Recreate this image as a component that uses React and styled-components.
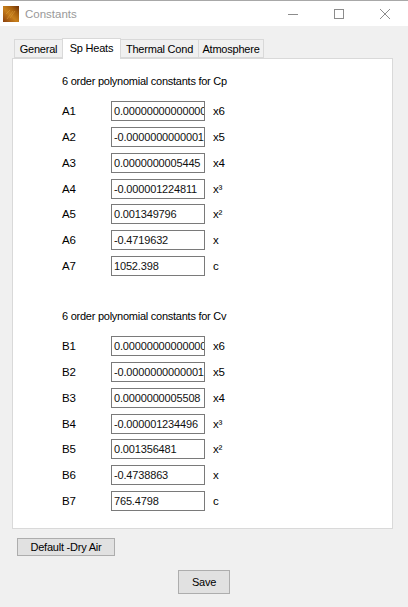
import React from "react";
import styled, { createGlobalStyle } from "styled-components";

const Global = createGlobalStyle`
  html, body { margin: 0; padding: 0; background: #f0f0f0; }
  * { box-sizing: border-box; }
  #root { width: 408px; height: 607px; overflow: hidden; }
`;

const Window = styled.div`
  width: 408px; height: 607px; background: #f0f0f0; display: flex; flex-direction: column;
  font-family: "Liberation Sans", Arial, sans-serif; font-size: 11px; color: #000;
  letter-spacing: -0.22px; border-top: 1px solid #a8a8a8;
`;
const TitleBar = styled.div`
  height: 25px; background: #fff; display: flex; align-items: center; flex: none;
`;
const AppIcon = styled.svg`
  width: 16px; height: 16px; margin-left: 3px; flex: none;
`;
const Title = styled.span`
  margin-left: 6px; font-size: 11.5px; color: #999; flex: 1; letter-spacing: 0;
`;
const Caption = styled.button`
  width: 46px; height: 25px; border: 0; background: none; padding: 0; display: flex;
  align-items: center; justify-content: center;
`;
const Tabs = styled.div`
  display: flex; align-items: flex-end; height: 32px; padding-left: 14px; flex: none;
  position: relative; z-index: 1;
`;
const Tab = styled.div`
  width: ${p => p.$w}px;
  height: ${p => (p.$active ? "21px" : "19px")};
  margin-bottom: ${p => (p.$active ? "-1px" : "0")};
  padding-bottom: ${p => (p.$active ? "2px" : "0")};
  margin-right: -1px;
  position: relative; z-index: ${p => (p.$active ? 2 : 0)};
  background: ${p => (p.$active ? "#fff" : "#f0f0f0")};
  border: 1px solid #d9d9d9;
  border-bottom: ${p => (p.$active ? "0" : "1px solid #d9d9d9")};
  display: flex; align-items: center; justify-content: center; white-space: nowrap;
`;
const Panel = styled.div`
  margin: 0 15px 0 12px; height: 471px; background: #fff; border: 1px solid #d9d9d9; flex: none;
  padding: 14px 0 0 49px;
`;
const Heading = styled.div`
  height: 16px; line-height: 16px; white-space: nowrap; letter-spacing: -0.25px;
`;
const Rows = styled.div`
  display: flex; flex-direction: column; gap: 5.85px; margin-top: 12px;
`;
const Row = styled.div`
  display: flex; align-items: center; height: 20px;
`;
const Label = styled.span`
  width: 49px; flex: none; font-size: 11.5px;
`;
const Field = styled.div`
  width: 94px; height: 20px; border: 1px solid #7a7a7a; background: #fff; padding: 0 0 0 2px;
  line-height: 18px; overflow: hidden; white-space: nowrap; flex: none; color: #111;
  letter-spacing: -0.16px; font-size: 11px;
`;
const Power = styled.span`
  margin-left: 8px; font-size: 11.5px;
`;
const Group = styled.section`
  margin-bottom: 32px;
`;
const DefaultButton = styled.button`
  width: 98px; height: 18px; margin: 9px 0 0 17px; padding: 0; background: #e1e1e1;
  border: 1px solid #adadad; font: inherit; letter-spacing: inherit; color: #000; flex: none; line-height: 14px;
`;
const Footer = styled.div`
  display: flex; justify-content: center; margin-top: 14px;
`;
const SaveButton = styled.button`
  width: 52px; height: 24px; padding: 0; background: #e1e1e1; border: 1px solid #adadad;
  font: inherit; letter-spacing: inherit; color: #000;
`;

const groups = [
  { title: "6 order polynomial constants for Cp", prefix: "A", values: ["0.00000000000000", "-0.0000000000001", "0.0000000005445", "-0.000001224811", "0.001349796", "-0.4719632", "1052.398"] },
  { title: "6 order polynomial constants for Cv", prefix: "B", values: ["0.00000000000000", "-0.0000000000001", "0.0000000005508", "-0.000001234496", "0.001356481", "-0.4738863", "765.4798"] },
];
const powers = ["x6", "x5", "x4", "x³", "x²", "x", "c"];

export default function App() {
  return (
    <Window>
      <Global />
      <TitleBar>
        <AppIcon viewBox="0 0 16 16">
          <defs>
            <linearGradient id="g" x1="0" y1="1" x2="1" y2="0">
              <stop offset="0" stopColor="#8a3f0c" />
              <stop offset=".45" stopColor="#c8801c" />
              <stop offset=".7" stopColor="#a9620f" />
              <stop offset="1" stopColor="#6b2f0a" />
            </linearGradient>
          </defs>
          <rect width="16" height="16" fill="url(#g)" />
          <path d="M4 13L10 5M7 12l5-7M3 8l4-4" stroke="#d89a3a" strokeWidth="1" opacity=".6" />
        </AppIcon>
        <Title>Constants</Title>
        <Caption aria-label="Minimize">
          <svg width="10" height="10" viewBox="0 0 10 10"><path d="M0 5.5h10" stroke="#8c8c8c" /></svg>
        </Caption>
        <Caption aria-label="Maximize">
          <svg width="10" height="10" viewBox="0 0 10 10"><rect x=".5" y=".5" width="9" height="9" fill="none" stroke="#8c8c8c" /></svg>
        </Caption>
        <Caption aria-label="Close">
          <svg width="10" height="10" viewBox="0 0 10 10"><path d="M0 0l10 10M10 0L0 10" stroke="#8c8c8c" /></svg>
        </Caption>
      </TitleBar>
      <Tabs>
        <Tab $w={49}>General</Tab>
        <Tab $w={59} $active>Sp Heats</Tab>
        <Tab $w={79}>Thermal Cond</Tab>
        <Tab $w={66}>Atmosphere</Tab>
      </Tabs>
      <Panel>
        {groups.map(g => (
          <Group key={g.prefix}>
            <Heading>{g.title}</Heading>
            <Rows>
              {g.values.map((v, i) => (
                <Row key={i}>
                  <Label>{g.prefix}{i + 1}</Label>
                  <Field>{v}</Field>
                  <Power>{powers[i]}</Power>
                </Row>
              ))}
            </Rows>
          </Group>
        ))}
      </Panel>
      <DefaultButton>Default -Dry Air</DefaultButton>
      <Footer><SaveButton>Save</SaveButton></Footer>
    </Window>
  );
}
